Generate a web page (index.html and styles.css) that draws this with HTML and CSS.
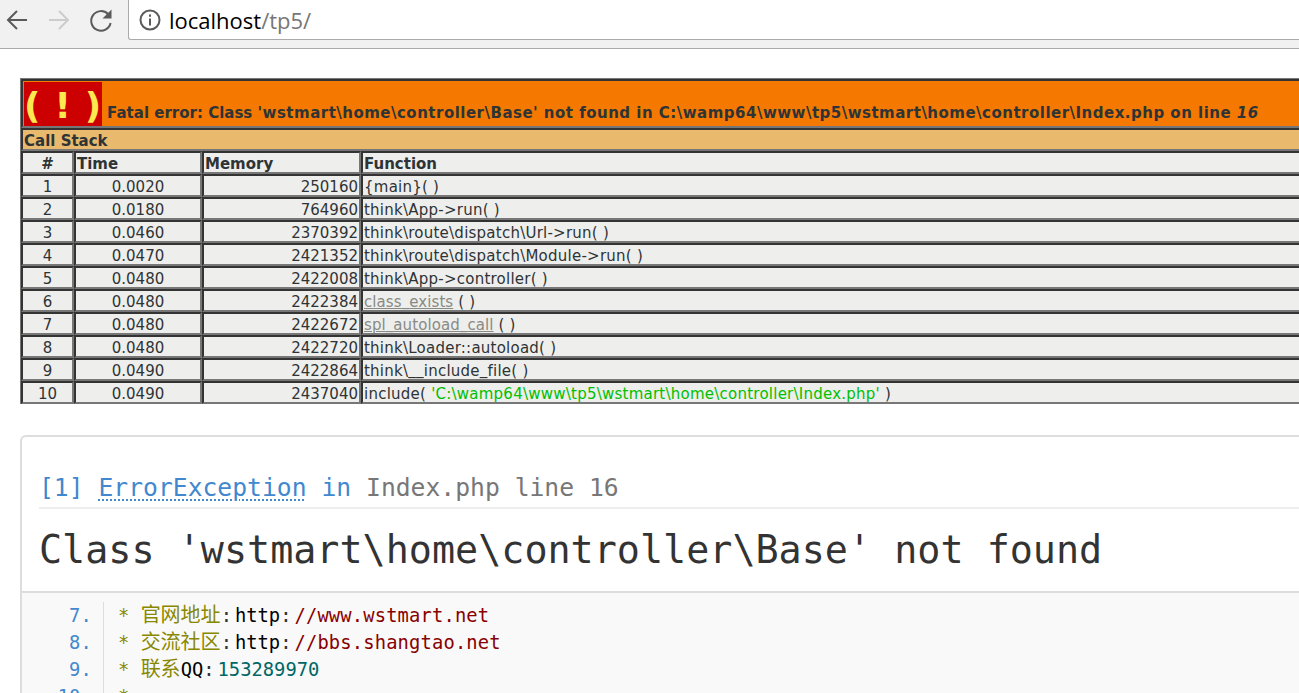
FILE: index.html
```html
<!DOCTYPE html>
<html lang="en">
<head>
<meta charset="utf-8">
<title>localhost/tp5/</title>
<link rel="stylesheet" href="styles.css">
</head>
<body>
<header class="toolbar">
  <nav class="nav-icons">
    <svg class="icon" viewBox="0 0 34 34"><path class="stroke-dark" d="M27 17H9M17 8l-9 9 9 9"/></svg>
    <svg class="icon" viewBox="0 0 34 34"><path class="stroke-light" d="M7 17h18M17 8l9 9-9 9"/></svg>
    <svg class="icon" viewBox="0 0 34 34"><path class="stroke-dark" d="M24 11a9.8 9.800 0 1 0 2.600 9"/><path class="fill-dark" d="M27.500 6.500v9h-9z"/></svg>
  </nav>
  <div class="address">
    <svg class="info" viewBox="0 0 22 22"><circle class="stroke-dark" cx="11" cy="11" r="9.500"/><path class="fill-dark" d="M10 5.500h2v2.200h-2zM10 9.500h2v7h-2z"/></svg>
    <span class="host">localhost</span><span class="path">/tp5/</span>
  </div>
</header>
<main class="page">
  <table class="xdebug">
    <colgroup><col class="col-n"><col class="col-t"><col class="col-m"><col class="col-f"></colgroup>
    <tr><th colspan="4" class="fatal"><span class="bang">( ! )</span> Fatal error: Class <span class="fatal-msg">'wstmart\home\controller\Base' not found in C:\wamp64\www\tp5\wstmart\home\controller\Index.php on line <i>16</i></span></th></tr>
    <tr><th colspan="4" class="stack">Call Stack</th></tr>
    <tr class="row-head"><th class="center">#</th><th>Time</th><th>Memory</th><th>Function</th></tr>
    <tr><td class="center">1</td><td class="center">0.0020</td><td class="right">250160</td><td class="fn">{main}( )</td></tr>
    <tr><td class="center">2</td><td class="center">0.0180</td><td class="right">764960</td><td class="fn">think\App-&gt;run( )</td></tr>
    <tr><td class="center">3</td><td class="center">0.0460</td><td class="right">2370392</td><td class="fn">think\route\dispatch\Url-&gt;run( )</td></tr>
    <tr><td class="center">4</td><td class="center">0.0470</td><td class="right">2421352</td><td class="fn">think\route\dispatch\Module-&gt;run( )</td></tr>
    <tr><td class="center">5</td><td class="center">0.0480</td><td class="right">2422008</td><td class="fn">think\App-&gt;controller( )</td></tr>
    <tr><td class="center">6</td><td class="center">0.0480</td><td class="right">2422384</td><td class="fn"><a class="fn-link" href="#">class<span class="us">_</span>exists</a> ( )</td></tr>
    <tr><td class="center">7</td><td class="center">0.0480</td><td class="right">2422672</td><td class="fn"><a class="fn-link" href="#">spl<span class="us">_</span>autoload<span class="us">_</span>call</a> ( )</td></tr>
    <tr><td class="center">8</td><td class="center">0.0480</td><td class="right">2422720</td><td class="fn">think\Loader::autoload( )</td></tr>
    <tr><td class="center">9</td><td class="center">0.0490</td><td class="right">2422864</td><td class="fn">think\<span class="us">__</span>include<span class="us">_</span>file( )</td></tr>
    <tr><td class="center">10</td><td class="center">0.0490</td><td class="right">2437040</td><td class="fn">include( <span class="str">'C:\wamp64\www\tp5\wstmart\home\controller\Index.php'</span> )</td></tr>
  </table>
  <section class="card">
    <div class="card-head">
      <h2 class="title"><span class="blue">[1] <abbr class="exc">ErrorException</abbr> in</span> <span class="grey">Index.php line 16</span></h2>
      <h1 class="message">Class 'wstmart\home\controller\Base' not found</h1>
    </div>
    <ol class="code" start="7">
      <li><span class="cm">* <span class="cjk">官网地址</span></span><span class="pun">:</span><span class="kw">http</span><span class="pun">:</span><span class="url">//www.wstmart.net</span></li>
      <li><span class="cm">* <span class="cjk">交流社区</span></span><span class="pun">:</span><span class="kw">http</span><span class="pun">:</span><span class="url">//bbs.shangtao.net</span></li>
      <li><span class="cm">* <span class="cjk">联系</span></span><span class="kw">QQ</span><span class="pun">:</span><span class="num">153289970</span></li>
      <li><span class="cm">*</span></li>
    </ol>
  </section>
</main>
</body>
</html>
```
FILE: styles.css
```css
* { box-sizing: border-box; }
html, body { margin: 0; height: 100%; overflow: hidden; background: #fff; }
body { font-family: "DejaVu Sans", sans-serif; color: #2e3436; }

.toolbar { display: flex; height: 49px; padding-bottom: 8px; background: #f1f1f1; border-bottom: 1px solid #aaa; }
.nav-icons { display: flex; gap: 8px; padding: 3px 10px 0 0; flex: none; width: 128px; }
.icon { width: 34px; height: 34px; flex: none; }
.stroke-dark, .stroke-light { fill: none; stroke-width: 2; }
.stroke-dark { stroke: #5a5a5a; }
.stroke-light { stroke: #ccc; }
.fill-dark { fill: #5a5a5a; }
.address { flex: 1; display: flex; align-items: center; margin-top: -1px; padding-left: 10px; background: #fff; border: 1px solid #aaa; border-right: 0; border-radius: 0 0 0 3px; font-family: "Open Sans", sans-serif; font-size: 22px; }
.info { width: 22px; height: 22px; margin-right: 8px; flex: none; }
.host { color: #000; }
.path { color: #777; }

.page { padding: 29px 0 0 20px; width: 1500px; }
.xdebug { width: 1480px; table-layout: fixed; border-collapse: separate; border-spacing: 0; border-top: 1px solid #777; border-left: 1px solid #777; font-size: 15px; line-height: 16px; }
.col-n { width: 53px; }
.col-t { width: 128px; }
.col-m { width: 159px; }
.xdebug th, .xdebug td { height: 23px; padding: 3px 1px 0; background: #eeeeec; text-align: left; white-space: nowrap; border-style: solid; border-width: 2px; border-color: #333 #777 #777 #333; }
.xdebug th { font-weight: bold; }
.xdebug .center { text-align: center; }
.xdebug .right { text-align: right; padding-right: 1px; }
.xdebug .fn { letter-spacing: 0.24px; }
.xdebug .fatal { background: #f57900; height: 49px; vertical-align: bottom; padding: 1px 1px 0; }
.xdebug .stack { background: #e9b96e; }
.fatal-msg { letter-spacing: 0.49px; }
.bang { display: inline-block; height: 44px; background: #cc0000; color: #fce94f; font-size: 36px; letter-spacing: 0.7px; line-height: 47px; }
.fn-link { color: #888a85; letter-spacing: 0.08px; }
.us { vertical-align: 2px; line-height: 0; }
.str { color: #00c000; }

.card { margin-top: 31px; width: 1500px; border: 2px solid #ddd; border-radius: 6px; font-family: "DejaVu Sans Mono", monospace; }
.card-head { padding: 0 17px; }
.title { margin: 0; padding-top: 36px; height: 72px; font-size: 24.7px; font-weight: normal; line-height: 30px; border-bottom: 2px solid #eee; }
.blue { color: #4288ce; }
.grey { color: #777; }
.exc { text-decoration: underline dotted #4288ce 2px; text-underline-offset: 3px; }
.message { margin: 0; height: 82px; padding-top: 17px; font-size: 38.4px; font-weight: normal; line-height: 48px; color: #333; }
.code { margin: 0; padding: 9px 0 0 81px; height: 120px; background: #f9f9f9; border-top: 2px solid #ddd; font-size: 18.8px; line-height: 27px; color: #000; }
.code li { padding-left: 14px; border-left: 1px solid #ddd; white-space: pre; }
.code li::marker { color: #4288ce; }
.cm { color: #880; }
.cjk { font-family: "Noto Sans CJK SC", sans-serif; font-size: 20px; line-height: 0; }
.kw { color: #000; }
.pun { color: #333; letter-spacing: 3px; }
.url { color: #800; letter-spacing: 0.15px; }
.num { color: #066; }
```
